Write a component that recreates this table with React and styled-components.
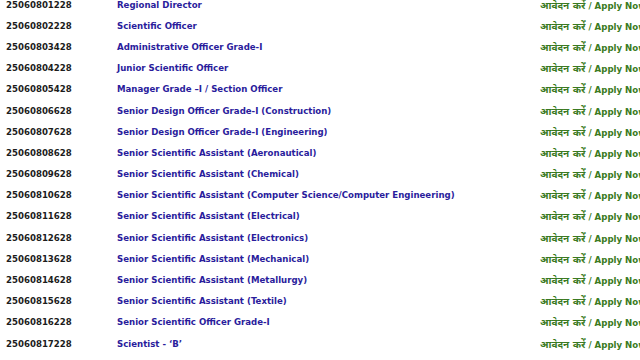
import React from "react";
import styled, { createGlobalStyle } from "styled-components";

const posts = [
	["25060801228", "Regional Director"],
	["25060802228", "Scientific Officer"],
	["25060803428", "Administrative Officer Grade-I"],
	["25060804228", "Junior Scientific Officer"],
	["25060805428", "Manager Grade \u2013I / Section Officer"],
	["25060806628", "Senior Design Officer Grade-I (Construction)"],
	["25060807628", "Senior Design Officer Grade-I (Engineering)"],
	["25060808628", "Senior Scientific Assistant (Aeronautical)"],
	["25060809628", "Senior Scientific Assistant (Chemical)"],
	["25060810628", "Senior Scientific Assistant (Computer Science/Computer Engineering)"],
	["25060811628", "Senior Scientific Assistant (Electrical)"],
	["25060812628", "Senior Scientific Assistant (Electronics)"],
	["25060813628", "Senior Scientific Assistant (Mechanical)"],
	["25060814628", "Senior Scientific Assistant (Metallurgy)"],
	["25060815628", "Senior Scientific Assistant (Textile)"],
	["25060816228", "Senior Scientific Officer Grade-I"],
	["25060817228", "Scientist - \u2018B\u2019"],
];

const App = () => {
	return (
		<>
			<GlobalStyle />
			<Table>
				{posts.map(([code, title]) => (
					<Row key={code}>
						<Code>{code}</Code>
						<Title href="#">{title}</Title>
						<Apply href="#">
							<Hindi>आवेदन करें</Hindi> / Apply Now
						</Apply>
					</Row>
				))}
			</Table>
		</>
	);
};

export default App;

const GlobalStyle = createGlobalStyle`
	html, body {
		margin: 0;
		padding: 0;
		background: #ffffff;
		overflow: hidden;
	}
	body {
		font-family: "DejaVu Sans", Verdana, "Noto Sans", sans-serif;
	}
`;

const Table = styled.div`
	display: flex;
	flex-direction: column;
	margin-top: -6px;
	padding-left: 6px;
	width: 720px;
`;

const Row = styled.div`
	display: grid;
	grid-template-columns: 111px 423px auto;
	align-items: center;
	height: 21.2px;
	font-size: 8.6px;
	font-weight: bold;
	white-space: nowrap;
`;

const Code = styled.span`
	color: #1c1c1c;
`;

const Title = styled.a`
	color: #2a1c9c;
	text-decoration: none;
`;

const Apply = styled.a`
	color: #3a7a22;
	text-decoration: none;
`;

const Hindi = styled.span`
	font-size: 10px;
`;
